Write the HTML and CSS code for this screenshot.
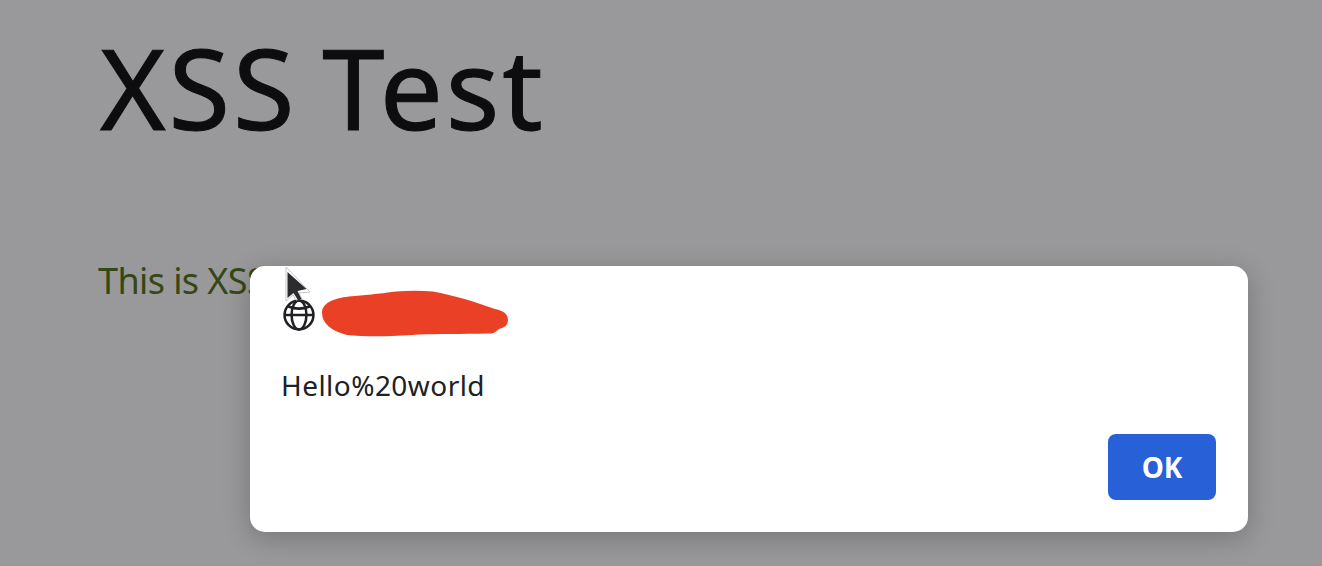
FILE: index.html
```html
<!DOCTYPE html>
<html lang="en">
<head>
  <meta charset="UTF-8">
  <meta name="viewport" content="width=device-width, initial-scale=1">
  <title>XSS Test</title>
  <link rel="stylesheet" href="styles.css">
</head>
<body>

  <main class="page">
    <h1>XSS Test</h1>
    <p class="message">This is XSS</p>
  </main>

  <div class="dialog" role="dialog">
    <div class="origin">
      <svg class="globe" viewBox="0 0 32 32">
        <circle cx="16" cy="16" r="13.6"/>
        <ellipse cx="16" cy="16" rx="7" ry="13.6"/>
        <path d="M2.5 16h27M6 8c6 2.4 14 2.4 20 0"/>
      </svg>
      <svg class="scribble" viewBox="0 0 188 48">
        <path d="M1 23C1 13 12 8.500 28 6.500C44 5 56 4 75 1.500C88 0.500 100 0.500 112 1.500C136 6 154 12 174 19C183 21 187 24 187 30C187 36 182 38 178 39C174 42 173 44 168 43.500C138 44 118 44 98 44.500C72 46.500 45 47 26 45C10 41 1 33 1 23Z"/>
      </svg>
    </div>
    <p class="text">Hello%20world</p>
    <button class="ok">OK</button>
  </div>

  <svg class="cursor" viewBox="0 0 28 40">
    <path class="edge" d="M1 1v34l7-6 3 5 6-1-3-6 11-1z"/>
    <path class="arrow" d="M2.500 6v26l6-5 5 8 3-2-4-8 9-2z"/>
  </svg>

</body>
</html>
```
FILE: styles.css
```css
body {
  margin: 0;
  height: 566px;
  overflow: hidden;
  background: #99999b;
  font-family: "Noto Sans", "Open Sans", sans-serif;
}
.page {
  padding: 27px 98px;
}
h1 {
  margin: 0;
  padding-left: 2px;
  font-size: 112px;
  font-weight: 400;
  line-height: 120px;
  letter-spacing: 2.9px;
  word-spacing: -7px;
  -webkit-text-stroke: 1px #0d0d0f;
  color: #0d0d0f;
}
.message {
  margin: 109px 0 0;
  font-size: 36px;
  line-height: 50px;
  letter-spacing: -0.6px;
  color: #364716;
}
.dialog {
  position: absolute;
  left: 250px;
  top: 266px;
  width: 998px;
  height: 266px;
  box-sizing: border-box;
  padding: 24px 32px 32px;
  display: flex;
  flex-direction: column;
  border-radius: 15px;
  background: #fff;
  box-shadow: 0 6px 28px rgba(0, 0, 0, 0.24);
}
.origin {
  display: flex;
  align-items: center;
  gap: 5px;
  height: 48px;
}
.globe {
  width: 34px;
  height: 34px;
  padding-top: 1px;
  fill: none;
  stroke: #202124;
  stroke-width: 2.4;
}
.scribble {
  width: 188px;
  height: 48px;
  fill: #ea4126;
}
.text {
  margin: 27px 0 0 -1px;
  font-size: 28px;
  line-height: 40px;
  letter-spacing: 0.45px;
  color: #202124;
}
.ok {
  align-self: flex-end;
  margin-top: auto;
  width: 108px;
  height: 66px;
  padding: 0;
  border: 0;
  border-radius: 8px;
  background: #2860d8;
  color: #fff;
  font: bold 28px "Noto Sans", sans-serif;
}
/* mouse pointer on top of the dialog */
.cursor {
  position: absolute;
  left: 285px;
  top: 266px;
  width: 28px;
  height: 40px;
}
.edge {
  fill: #fff;
  stroke: #c8c8c8;
}
.arrow {
  fill: #2c2c2e;
}
```
